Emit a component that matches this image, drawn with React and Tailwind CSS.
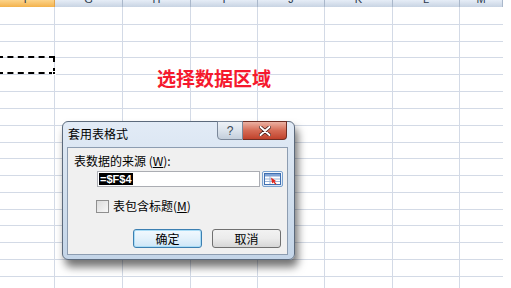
import React from 'react';

const colWidths = [55, 68, 68, 67, 67, 68, 67, 43];
const colLetters = ['F', 'G', 'H', 'I', 'J', 'K', 'L', 'M'];
const rowHeights = [18, 17, 16, 17, 17, 17, 17, 17, 16, 17, 17, 17, 16, 17, 17, 17, 17];

const cjk = { fontFamily: '"Noto Sans CJK SC", "Noto Sans", sans-serif' };

const RangeIcon = () => (
  <svg width="17" height="12" viewBox="0 0 17 12">
    <rect x="0.5" y="0.5" width="16" height="11" fill="#ffffff" stroke="#3f6fb0" />
    <rect x="1" y="1" width="15" height="2.5" fill="#7fa3d6" />
    <line x1="1" y1="6" x2="16" y2="6" stroke="#9db5d8" />
    <line x1="1" y1="8.5" x2="16" y2="8.5" stroke="#9db5d8" />
    <line x1="6" y1="3" x2="6" y2="11" stroke="#9db5d8" />
    <path d="M7 4.5 L12 8 L10.5 8.6 L12.5 11 L11.3 11.5 L9.4 9.2 L8.2 10.5 Z" fill="#e0261c" />
  </svg>
);

const Sheet = () => (
  <div className="w-[503px]">
    {/* column header strip, scrolled so only the foot of each letter shows */}
    <div className="flex h-[7px]">
      {colWidths.map((w, i) => (
        <div
          key={i}
          style={{ width: w }}
          className={
            i === 0
              ? 'h-full bg-gradient-to-b from-[#fcd48a] to-[#f3b24a] border-r border-[#e2a34a] overflow-hidden flex justify-center'
              : 'h-full bg-gradient-to-b from-[#e6edf7] to-[#c8d4e3] border-r border-[#aab8cb] overflow-hidden flex justify-center'
          }
        >
          <span className="text-[11px] leading-[11px] mt-[-6px] text-[#2b3a4d] font-['Liberation_Sans',sans-serif]">
            {colLetters[i]}
          </span>
        </div>
      ))}
    </div>
    {rowHeights.map((h, r) => (
      <div key={r} className="flex" style={{ height: h }}>
        {colWidths.map((w, c) => (
          <div
            key={c}
            style={{ width: w }}
            className={
              c === colWidths.length - 1
                ? 'h-full border-b border-[#d3dae6]'
                : 'h-full border-b border-r border-[#d3dae6]'
            }
          />
        ))}
      </div>
    ))}
  </div>
);

const Dialog = () => (
  <div
    className="absolute left-[62px] top-[121px] w-[233px] h-[139px] rounded-[6px] border border-[#5c6a7c] bg-gradient-to-b from-[#e2ebf6] via-[#d3e0ee] to-[#c4d5e8] shadow-[3px_7px_9px_rgba(0,0,0,0.55)] flex flex-col"
    style={cjk}
  >
    <div className="flex h-[25px] shrink-0">
      <div className="flex-1 pl-[5px] pt-[5px] text-[12px] leading-[14px] text-black">套用表格式</div>
      <div className="flex mr-[7px] mt-[-1px] h-[19px]">
        <div className="w-[26px] h-full rounded-bl-[4px] border border-[#7b889a] bg-gradient-to-b from-[#eef2f7] via-[#dbe3ec] to-[#c3cedb] flex items-center justify-center text-[12px] leading-none text-[#3a4654] font-['Liberation_Sans',sans-serif]">
          ?
        </div>
        <div className="w-[44px] h-full rounded-br-[4px] border border-l-0 border-[#6f2e24] bg-gradient-to-b from-[#eab1a3] via-[#d56b55] to-[#c0412b] flex items-center justify-center">
          <svg width="12" height="10" viewBox="0 0 12 10">
            <path d="M1.5 1 L10.5 9 M10.5 1 L1.5 9" stroke="#3b1410" strokeWidth="3.4" strokeLinecap="round" />
            <path d="M1.5 1 L10.5 9 M10.5 1 L1.5 9" stroke="#ffffff" strokeWidth="2" strokeLinecap="round" />
          </svg>
        </div>
      </div>
    </div>
    <div className="mx-[4px] mb-[4px] mr-[6px] flex-1 bg-[#f0f0f0] border border-[#8d9db1] pl-[6px] pt-[5px] text-[12px] text-black">
      <div className="leading-[16px]">
        表数据的来源 (<span className="underline">W</span>):
      </div>
      <div className="flex ml-[23px] mt-[2px] h-[16px]">
        <div className="w-[163px] h-full bg-white border border-[#abadb3] flex items-center pl-[1px]">
          <span className="bg-black text-white text-[11px] leading-[12px] font-bold px-[1px] font-['Liberation_Sans',sans-serif]">
            =$F$4
          </span>
        </div>
        <div className="ml-[2px] w-[21px] h-full rounded-[2px] border border-[#7aa2cf] bg-gradient-to-b from-[#f4f8fd] to-[#d9e6f5] flex items-center justify-center">
          <RangeIcon />
        </div>
      </div>
      <div className="flex items-center ml-[22px] mt-[12px] h-[14px]">
        <div className="w-[13px] h-[13px] border border-[#8f8f8f] bg-gradient-to-br from-[#dcdcdc] to-[#f8f8f8]" />
        <span className="ml-[4px] leading-[14px]">
          表包含标题(<span className="underline">M</span>)
        </span>
      </div>
      <div className="flex ml-[59px] mt-[16px] gap-[10px]">
        <div className="w-[69px] h-[19px] rounded-[3px] border border-[#3c7fb1] bg-gradient-to-b from-[#f2f9fe] via-[#e3f1fb] to-[#cde6f7] shadow-[inset_0_0_0_1px_#a9dcf6] flex items-center justify-center leading-none">
          确定
        </div>
        <div className="w-[69px] h-[19px] rounded-[3px] border border-[#707070] bg-gradient-to-b from-[#f2f2f2] via-[#ebebeb] to-[#d6d6d6] flex items-center justify-center leading-none">
          取消
        </div>
      </div>
    </div>
  </div>
);

export default function App() {
  return (
    <div className="relative w-[511px] h-[288px] overflow-hidden bg-white">
      <Sheet />
      {/* marching ants selection */}
      <div className="absolute left-[-3px] top-[56px] w-[58px] h-[18px] border-2 border-dashed border-black" />
      <div className="absolute left-[52px] top-[71px] w-[4px] h-[4px] bg-black border border-white" />
      <div
        className="absolute left-[157px] top-[66px] text-[19px] leading-[24px] font-bold text-[#f5192d]"
        style={cjk}
      >
        选择数据区域
      </div>
      <Dialog />
    </div>
  );
}
